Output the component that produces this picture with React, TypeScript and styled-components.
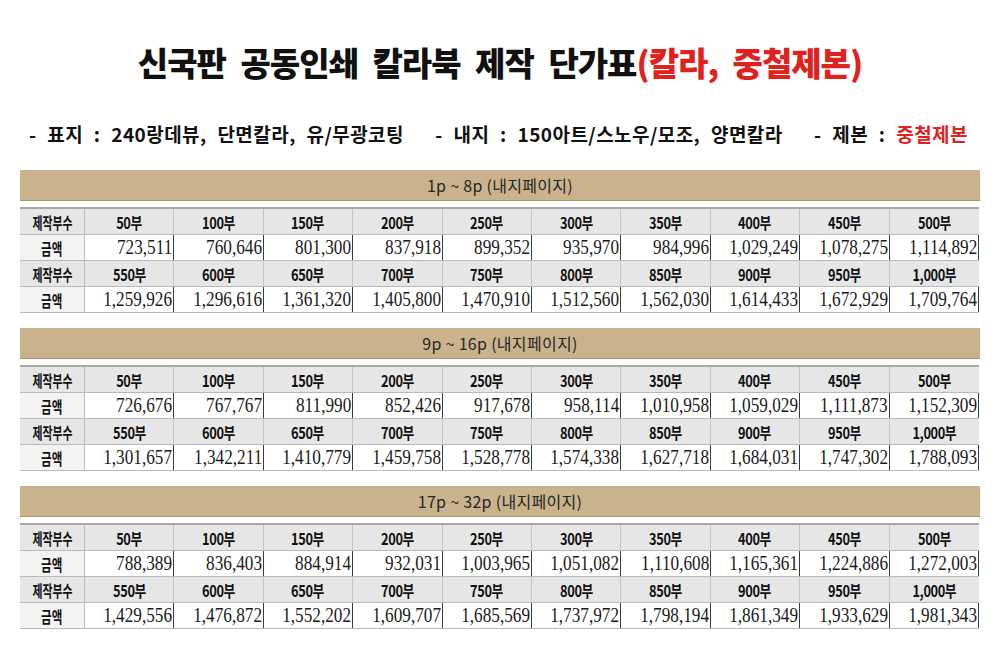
import React from "react";
import styled, { createGlobalStyle } from "styled-components";

const Global = createGlobalStyle`
  html, body { margin: 0; padding: 0; background: #ffffff; }
  body { font-family: "Noto Sans CJK KR", "Noto Sans", sans-serif; color: #111; }
`;

const Page = styled.div`
  width: 1000px;
  height: 667px;
  box-sizing: border-box;
  padding: 42px 20px 0 20px;
  display: flex;
  flex-direction: column;
  overflow: hidden;
`;

const Title = styled.h1`
  margin: 0;
  height: 40px;
  line-height: 40px;
  text-align: center;
  font-size: 33px;
  font-weight: 900;
  letter-spacing: -1px;
  word-spacing: 8px;
  color: #111;
  white-space: pre;
`;

const Red = styled.span`
  color: #e0211d;
`;

const Sub = styled.div`
  margin-top: 40px;
  height: 24px;
  line-height: 24px;
  display: flex;
  justify-content: space-between;
  padding: 0 12px 0 9px;
  font-size: 19px;
  font-weight: 700;
  letter-spacing: 0.45px;
  word-spacing: 6px;
  white-space: pre;
`;

const Block = styled.section`
  display: flex;
  flex-direction: column;
  margin-top: ${(p: { $first?: boolean }) => (p.$first ? "24px" : "15px")};
`;

const Band = styled.div`
  width: 960px;
  height: 30px;
  line-height: 30px;
  background: #c9b28c;
  border-bottom: 1px solid #a9956f;
  text-align: center;
  font-size: 16px;
  font-weight: 400;
  letter-spacing: 0.3px;
  color: #262626;
  white-space: pre;
`;

const Table = styled.div`
  margin-top: 6px;
  width: 959px;
  border-top: 2px solid #a8a8a8;
`;

const Row = styled.div<{ $kind: "qty" | "amt" }>`
  display: grid;
  grid-template-columns: 65px repeat(10, 1fr);
  height: 25px;
  border-bottom: 1px solid #b9b9b9;
  background: ${(p) => (p.$kind === "qty" ? "#e6e6e6" : "#ffffff")};
`;

const LabelCell = styled.div<{ $kind: "qty" | "amt" }>`
  display: flex;
  align-items: center;
  justify-content: center;
  background: ${(p) => (p.$kind === "qty" ? "#e6e6e6" : "#f3f3f3")};
  border-right: 1px solid #bdbdbd;
  overflow: hidden;
`;

const QtyCell = styled.div`
  display: flex;
  align-items: center;
  justify-content: center;
  border-right: 1px solid #c4c4c4;
  overflow: visible;
  &:last-child { border-right: none; }
`;

const AmtCell = styled.div`
  display: flex;
  align-items: center;
  justify-content: flex-end;
  padding-right: 1px;
  border-right: 1px solid #3c3c3c;
  background: #ffffff;
  overflow: visible;
`;

const Squeeze = styled.span<{ $sx: number; $origin?: string }>`
  display: inline-block;
  white-space: nowrap;
  transform: scaleX(${(p) => p.$sx});
  transform-origin: ${(p) => p.$origin || "center"};
`;

const LabelText = styled(Squeeze)`
  font-size: 16px;
  font-weight: 700;
  color: #111;
`;

const QtyText = styled(Squeeze)`
  font-size: 16px;
  font-weight: 700;
  color: #111;
  letter-spacing: -0.5px;
`;

const Num = styled(Squeeze)`
  font-family: "Liberation Serif", "DejaVu Serif", serif;
  font-size: 20px;
  color: #1a1a1a;
`;

const qty1 = ["50부", "100부", "150부", "200부", "250부", "300부", "350부", "400부", "450부", "500부"];
const qty2 = ["550부", "600부", "650부", "700부", "750부", "800부", "850부", "900부", "950부", "1,000부"];

const blocks = [
  {
    title: "1p ~ 8p (내지페이지)",
    a1: ["723,511", "760,646", "801,300", "837,918", "899,352", "935,970", "984,996", "1,029,249", "1,078,275", "1,114,892"],
    a2: ["1,259,926", "1,296,616", "1,361,320", "1,405,800", "1,470,910", "1,512,560", "1,562,030", "1,614,433", "1,672,929", "1,709,764"],
  },
  {
    title: "9p ~ 16p (내지페이지)",
    a1: ["726,676", "767,767", "811,990", "852,426", "917,678", "958,114", "1,010,958", "1,059,029", "1,111,873", "1,152,309"],
    a2: ["1,301,657", "1,342,211", "1,410,779", "1,459,758", "1,528,778", "1,574,338", "1,627,718", "1,684,031", "1,747,302", "1,788,093"],
  },
  {
    title: "17p ~ 32p (내지페이지)",
    a1: ["788,389", "836,403", "884,914", "932,031", "1,003,965", "1,051,082", "1,110,608", "1,165,361", "1,224,886", "1,272,003"],
    a2: ["1,429,556", "1,476,872", "1,552,202", "1,609,707", "1,685,569", "1,737,972", "1,798,194", "1,861,349", "1,933,629", "1,981,343"],
  },
];

function QtyRow({ items }: { items: string[] }) {
  return (
    <Row $kind="qty">
      <LabelCell $kind="qty">
        <LabelText $sx={0.68}>제작부수</LabelText>
      </LabelCell>
      {items.map((q) => (
        <QtyCell key={q}>
          <QtyText $sx={0.8}>{q}</QtyText>
        </QtyCell>
      ))}
    </Row>
  );
}

function AmtRow({ items }: { items: string[] }) {
  return (
    <Row $kind="amt">
      <LabelCell $kind="amt">
        <LabelText $sx={0.72}>금액</LabelText>
      </LabelCell>
      {items.map((a, i) => (
        <AmtCell key={i}>
          <Num $sx={0.86} $origin="right">{a}</Num>
        </AmtCell>
      ))}
    </Row>
  );
}

export default function App() {
  return (
    <>
      <Global />
      <Page>
        <Title>
          신국판 공동인쇄 칼라북 제작 단가표<Red>(칼라, 중철제본)</Red>
        </Title>
        <Sub>
          <span>- 표지 : 240랑데뷰, 단면칼라, 유/무광코팅</span>
          <span>- 내지 : 150아트/스노우/모조, 양면칼라</span>
          <span>
            - 제본 : <Red>중철제본</Red>
          </span>
        </Sub>
        {blocks.map((b, i) => (
          <Block key={b.title} $first={i === 0}>
            <Band>{b.title}</Band>
            <Table>
              <QtyRow items={qty1} />
              <AmtRow items={b.a1} />
              <QtyRow items={qty2} />
              <AmtRow items={b.a2} />
            </Table>
          </Block>
        ))}
      </Page>
    </>
  );
}
